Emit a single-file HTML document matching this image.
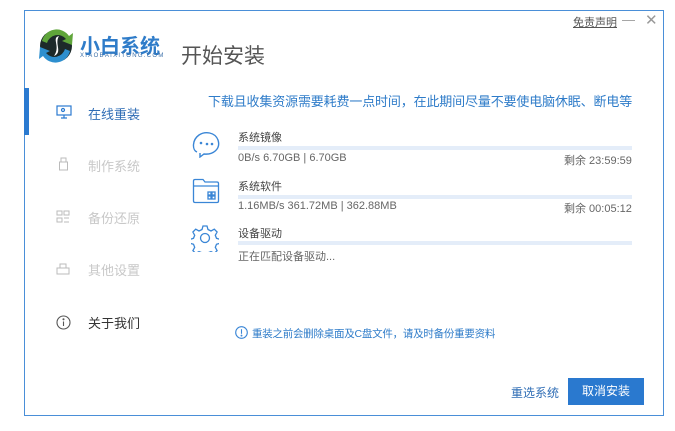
<!DOCTYPE html>
<html><head><meta charset="utf-8"><style>
*{margin:0;padding:0;box-sizing:border-box}
body{width:675px;height:431px;background:#fff;position:relative;overflow:hidden;font-family:"Liberation Sans","Noto Sans CJK SC",sans-serif}
.win{position:absolute;left:24px;top:10px;width:640px;height:406px;border:1px solid #4a8fd8;background:#fff}
.a{position:absolute;white-space:nowrap}
.bar{position:absolute;left:238px;width:394px;height:4px;background:#e4edf9}
.nav{font-size:13px;color:#c8c8c8}
</style></head><body>
<div class="win"></div>
<svg class="a" style="left:37px;top:27px" width="40" height="38" viewBox="0 0 40 38">
<circle cx="19" cy="19" r="16" fill="#1d2a2a"/>
<path d="M5 14 A15 15 0 0 1 32 9 L36 6 L35 18 L25 14 L29 12 A11 11 0 0 0 10 16Z" fill="#5fa53a"/>
<path d="M33 24 A15 15 0 0 1 6 29 L2 32 L3 20 L13 24 L9 26 A11 11 0 0 0 28 22Z" fill="#2d8fcf"/>
<path d="M22 9 C14 11 24 19 17 29 C26 25 17 17 22 9Z" fill="#fff"/>
</svg>
<div class="a" style="left:80px;top:30px;font-size:20px;font-weight:bold;color:#2f7cc9">小白系统</div>
<div class="a" style="left:80px;top:53px;font-size:6px;color:#3b6fa8;letter-spacing:1.3px">XIAOBAIXITONG.COM</div>
<div class="a" style="left:181px;top:40px;font-size:21px;color:#555">开始安装</div>
<div class="a" style="left:573px;top:14px;font-size:11px;color:#555;text-decoration:underline">免责声明</div>
<div class="a" style="left:622px;top:12px;font-size:13px;color:#999">—</div>
<div class="a" style="left:645px;top:11px;font-size:15px;color:#999">✕</div>
<div class="a" style="left:24px;top:88px;width:5px;height:47px;background:#2b7ad0"></div>
<svg class="a" style="left:56px;top:105px" width="16" height="14" viewBox="0 0 16 14" fill="none" stroke="#2b7ad0" stroke-width="1.2"><rect x="1" y="1" width="14" height="9"/><path d="M5 13h6M8 10v3"/><circle cx="7" cy="5" r="1.5"/></svg>
<div class="a" style="left:88px;top:104px;font-size:13px;color:#2f6db5">在线重装</div>
<svg class="a" style="left:58px;top:157px" width="11" height="14" viewBox="0 0 11 14" fill="none" stroke="#bbb" stroke-width="1"><path d="M3 1h5v4H3zM1.5 5h8v8h-8z"/></svg>
<div class="a nav" style="left:88px;top:156px">制作系统</div>
<svg class="a" style="left:56px;top:210px" width="14" height="13" viewBox="0 0 14 13" fill="none" stroke="#bbb" stroke-width="1"><path d="M1 1h5v4H1zM8 1h5v4H8zM1 8h5v4H1zM8 8h5M8 12h5"/></svg>
<div class="a nav" style="left:88px;top:208px">备份还原</div>
<svg class="a" style="left:56px;top:263px" width="14" height="12" viewBox="0 0 14 12" fill="none" stroke="#bbb" stroke-width="1"><path d="M1 5h12v6H1zM4 5V1h6v4"/></svg>
<div class="a nav" style="left:88px;top:260px">其他设置</div>
<svg class="a" style="left:56px;top:315px" width="15" height="15" viewBox="0 0 15 15" fill="none" stroke="#555" stroke-width="1.1"><circle cx="7.5" cy="7.5" r="6.5"/><path d="M7.5 6.5v4.5"/><circle cx="7.5" cy="4.3" r=".5" fill="#555"/></svg>
<div class="a" style="left:88px;top:313px;font-size:13px;color:#333">关于我们</div>
<div class="a" style="left:208px;top:91px;font-size:13px;color:#2f7cc9;letter-spacing:-0.15px">下载且收集资源需要耗费一点时间，在此期间尽量不要使电脑休眠、断电等</div>
<svg class="a" style="left:191px;top:130px" width="30" height="28" viewBox="0 0 30 28" fill="none" stroke="#3a86d6" stroke-width="1.4"><path d="M6 22 C1 20 1 10 8 5 C14 1 24 2 27 10 C30 19 22 25 13 24 L9 27 L9 23"/><circle cx="10" cy="13" r=".6"/><circle cx="16" cy="14" r=".6"/><circle cx="21" cy="14" r=".6"/></svg>
<div class="a" style="left:238px;top:129px;font-size:11px;color:#444">系统镜像</div>
<div class="bar" style="top:146px"></div>
<div class="a" style="left:238px;top:152px;font-size:11px;color:#666">0B/s 6.70GB | 6.70GB</div>
<div class="a" style="left:564px;top:152px;font-size:11px;color:#666">剩余 23:59:59</div>
<svg class="a" style="left:192px;top:178px" width="28" height="26" viewBox="0 0 28 26" fill="none" stroke="#3a86d6" stroke-width="1.3"><path d="M1.5 3 Q1.5 1.5 3 1.5 H11 L13 4 H25 Q26.5 4 26.5 5.5 V23 Q26.5 24.5 25 24.5 H3 Q1.5 24.5 1.5 23Z M1.5 8H26.5"/><rect x="16" y="14" width="3" height="3"/><rect x="20" y="14" width="3" height="3"/><rect x="16" y="18" width="3" height="3"/><rect x="20" y="18" width="3" height="3"/></svg>
<div class="a" style="left:238px;top:178px;font-size:11px;color:#444">系统软件</div>
<div class="bar" style="top:195px"></div>
<div class="a" style="left:238px;top:200px;font-size:11px;color:#666">1.16MB/s 361.72MB | 362.88MB</div>
<div class="a" style="left:564px;top:200px;font-size:11px;color:#666">剩余 00:05:12</div>
<svg class="a" style="left:191px;top:224px" width="28" height="28" viewBox="0 0 28 28" fill="none" stroke="#3a86d6" stroke-width="1.3"><path d="M12 2h4l1 3.5 3 1.5 3.3-1.8 2.8 2.8-1.8 3.3 1.2 3 3.5 1v4l-3.5 1-1.2 3 1.8 3.3-2.8 2.8-3.3-1.8-3 1.2-1 3.5h-4l-1-3.5-3-1.2-3.3 1.8-2.8-2.8 1.8-3.3-1.2-3-3.5-1v-4l3.5-1 1.2-3-1.8-3.3 2.8-2.8 3.3 1.8 3-1.5z"/><circle cx="14" cy="14" r="4.5"/></svg>
<div class="a" style="left:238px;top:225px;font-size:11px;color:#444">设备驱动</div>
<div class="bar" style="top:241px"></div>
<div class="a" style="left:238px;top:248px;font-size:11px;color:#666">正在匹配设备驱动...</div>
<svg class="a" style="left:235px;top:326px" width="13" height="13" viewBox="0 0 13 13" fill="none" stroke="#3a86d6" stroke-width="1.1"><circle cx="6.5" cy="6.5" r="5.8"/><path d="M6.5 3.2v4.6"/><circle cx="6.5" cy="9.6" r=".4" fill="#3a86d6"/></svg>
<div class="a" style="left:252px;top:326px;font-size:10.5px;color:#2f7cc9;letter-spacing:-0.25px">重装之前会删除桌面及C盘文件，请及时备份重要资料</div>
<div class="a" style="left:511px;top:384px;font-size:12px;color:#2f6db5">重选系统</div>
<div class="a" style="left:568px;top:378px;width:76px;height:27px;background:#2a79cf;color:#fff;font-size:12px;text-align:center;line-height:27px">取消安装</div>
</body></html>
